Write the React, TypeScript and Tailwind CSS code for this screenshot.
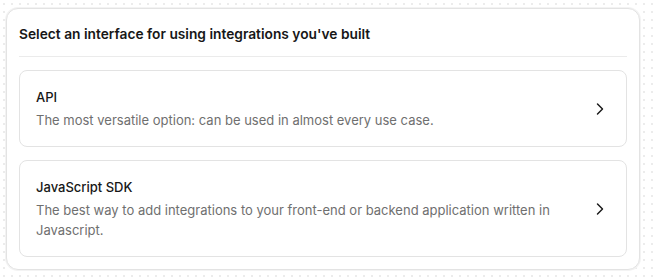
import React from "react";
import { ChevronRight } from "lucide-react";

interface Option {
  title: string;
  description: string;
}

const options: Option[] = [
  {
    title: "API",
    description: "The most versatile option: can be used in almost every use case.",
  },
  {
    title: "JavaScript SDK",
    description:
      "The best way to add integrations to your front-end or backend application written in Javascript.",
  },
];

function OptionCard({ title, description }: Option) {
  return (
    <button className="flex w-full items-center gap-4 rounded-lg border border-[#e3e3e3] bg-white px-4 py-4 text-left">
      <div className="flex-1">
        <div className="text-[13px] leading-5 font-medium text-[#171717]">{title}</div>
        <div className="mt-[3px] text-[13px] leading-5 text-[#6f6f6f]">{description}</div>
      </div>
      <ChevronRight className="h-5 w-5 shrink-0 text-[#1a1a1a]" strokeWidth={1.75} />
    </button>
  );
}

export default function App() {
  return (
    <div
      className="h-[280px] w-full overflow-hidden bg-white bg-[radial-gradient(#ececec_1px,transparent_1px)] bg-size-[8px_8px] pt-[8px] pl-[6px]"
      style={{ fontFamily: "Inter, 'Noto Sans', sans-serif" }}
    >
      <div className="w-[634px] rounded-xl border border-[#e3e3e3] bg-white px-3 pb-3 shadow-[0_0_0_1px_#f3f3f3]">
        {/* Header */}
        <div className="border-b border-[#ebebeb] pt-[15px] pb-3 text-[13.75px] leading-5 font-semibold text-[#171717]">
          Select an interface for using integrations you've built
        </div>

        {/* Options */}
        <div className="mt-[13px] flex flex-col gap-[13px]">
          {options.map((o) => (
            <OptionCard key={o.title} {...o} />
          ))}
        </div>
      </div>
    </div>
  );
}
